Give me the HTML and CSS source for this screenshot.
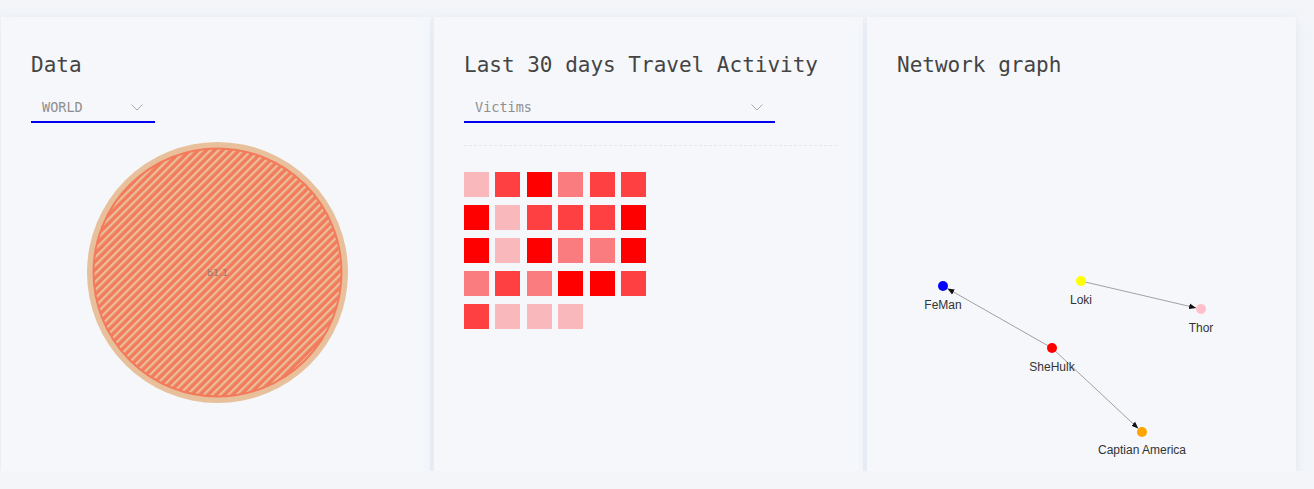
FILE: index.html
```html
<!DOCTYPE html>
<html lang="en">
<head>
<meta charset="utf-8">
<title>Dashboard</title>
<link rel="stylesheet" href="styles.css">
</head>
<body>
<main class="dashboard">
  <section class="card">
    <h2 class="card-title">Data</h2>
    <div class="select select-short">
      <span>WORLD</span>
      <svg class="chevron" width="12" height="7" viewBox="0 0 12 7"><path d="M0.5 0.5 L6 6 L11.5 0.5" fill="none" stroke="#aaa" stroke-width="1"/></svg>
    </div>
    <svg class="pack" width="369" height="300" viewBox="0 0 369 300">
      <defs>
        <pattern id="stripes" patternUnits="userSpaceOnUse" width="5.8" height="5.8" patternTransform="rotate(45)">
          <rect width="5.8" height="5.8" fill="#f37b5c"/>
          <rect x="0" width="2.3" height="5.8" fill="#e8bf98"/>
        </pattern>
      </defs>
      <circle cx="186.5" cy="149.5" r="130.5" fill="#e8c09c"/>
      <circle cx="186.5" cy="149.5" r="124" fill="url(#stripes)" stroke="#f37b5c" stroke-width="2"/>
      <text class="pack-label" x="186.5" y="153" text-anchor="middle">b1.1</text>
    </svg>
  </section>

  <section class="card">
    <h2 class="card-title">Last 30 days Travel Activity</h2>
    <div class="select select-long">
      <span>Victims</span>
      <svg class="chevron" width="12" height="7" viewBox="0 0 12 7"><path d="M0.5 0.5 L6 6 L11.5 0.5" fill="none" stroke="#aaa" stroke-width="1"/></svg>
    </div>
    <div class="divider"></div>
    <div class="heatmap">
      <span class="cell l1"></span><span class="cell l3"></span><span class="cell l4"></span><span class="cell l2"></span><span class="cell l3"></span><span class="cell l3"></span>
      <span class="cell l4"></span><span class="cell l1"></span><span class="cell l3"></span><span class="cell l3"></span><span class="cell l3"></span><span class="cell l4"></span>
      <span class="cell l4"></span><span class="cell l1"></span><span class="cell l4"></span><span class="cell l2"></span><span class="cell l2"></span><span class="cell l4"></span>
      <span class="cell l2"></span><span class="cell l3"></span><span class="cell l2"></span><span class="cell l4"></span><span class="cell l4"></span><span class="cell l3"></span>
      <span class="cell l3"></span><span class="cell l1"></span><span class="cell l1"></span><span class="cell l1"></span>
    </div>
  </section>

  <section class="card">
    <h2 class="card-title">Network graph</h2>
    <svg class="graph" width="369" height="390" viewBox="0 0 369 390">
      <defs>
        <marker id="arrow" viewBox="0 -5 10 10" refX="10" refY="0" markerUnits="userSpaceOnUse" markerWidth="7" markerHeight="7" orient="auto">
          <path d="M0,-4L10,0L0,4Z" fill="#111"/>
        </marker>
      </defs>
      <g class="links">
        <line x1="155" y1="269" x2="50.4" y2="209.5" marker-end="url(#arrow)"/>
        <line x1="184" y1="202" x2="299.1" y2="228.9" marker-end="url(#arrow)"/>
        <line x1="155" y1="269" x2="241.3" y2="349.6" marker-end="url(#arrow)"/>
      </g>
      <g class="nodes">
        <circle cx="46" cy="207" r="5" fill="#0000ff"/>
        <circle cx="184" cy="202" r="5" fill="#ffff00"/>
        <circle cx="304" cy="230" r="5" fill="#ffc0cb"/>
        <circle cx="155" cy="269" r="5" fill="#ff0000"/>
        <circle cx="245" cy="353" r="5" fill="#ffa500"/>
      </g>
      <g class="labels">
        <text x="46" y="229.5">FeMan</text>
        <text x="184" y="224.5">Loki</text>
        <text x="304" y="252.5">Thor</text>
        <text x="155" y="291.5">SheHulk</text>
        <text x="245" y="375">Captian America</text>
      </g>
    </svg>
  </section>
</main>
</body>
</html>
```
FILE: styles.css
```css
html, body {
  margin: 0;
  padding: 0;
  background: #f3f5f9;
}

.dashboard {
  display: flex;
  gap: 4px;
  padding: 17px 0 0 1px;
}

.card {
  box-sizing: border-box;
  width: 429px;
  height: 454px;
  padding: 34px 30px 0;
  background: #f5f7fb;
  box-shadow: 0 7px 12px -3px rgba(210, 222, 238, 0.6), 0 0 6px rgba(225, 232, 242, 0.5);
  overflow: hidden;
}

.card-title {
  margin: 0;
  font-family: "DejaVu Sans Mono", "Liberation Mono", monospace;
  font-weight: normal;
  font-size: 21px;
  line-height: 28px;
  color: #444;
}

.select {
  box-sizing: border-box;
  margin-top: 14px;
  display: flex;
  align-items: center;
  justify-content: space-between;
  padding: 4px 12px 4px 11px;
  border-bottom: 2px solid #0000ee;
  font-family: "DejaVu Sans Mono", "Liberation Mono", monospace;
  font-size: 13.5px;
  line-height: 20px;
  color: #8f8f8f;
}

.select-short { width: 124px; }
.select-long { width: 311px; }

.chevron { display: block; }

.pack {
  display: block;
  overflow: visible;
}

.pack-label {
  font-family: "DejaVu Sans", sans-serif;
  font-size: 9.5px;
  fill: rgba(130, 110, 110, 0.75);
}

.divider {
  margin-top: 22px;
  width: 373px;
  border-top: 1px dashed #e3e7ee;
}

.heatmap {
  margin-top: 26px;
  display: grid;
  grid-template-columns: repeat(6, 25px);
  column-gap: 6.4px;
  row-gap: 8px;
}

.cell {
  display: block;
  width: 25px;
  height: 25px;
}

.l1 { background: #f9b9bc; }
.l2 { background: #fa7c7f; }
.l3 { background: #ff4042; }
.l4 { background: #ff0000; }

.graph {
  display: block;
  overflow: visible;
}

.links line {
  stroke: #8a8a8a;
  stroke-width: 0.8;
}

.labels text {
  font-family: "Liberation Sans", Arial, sans-serif;
  font-size: 12px;
  fill: #333;
  text-anchor: middle;
}
```
